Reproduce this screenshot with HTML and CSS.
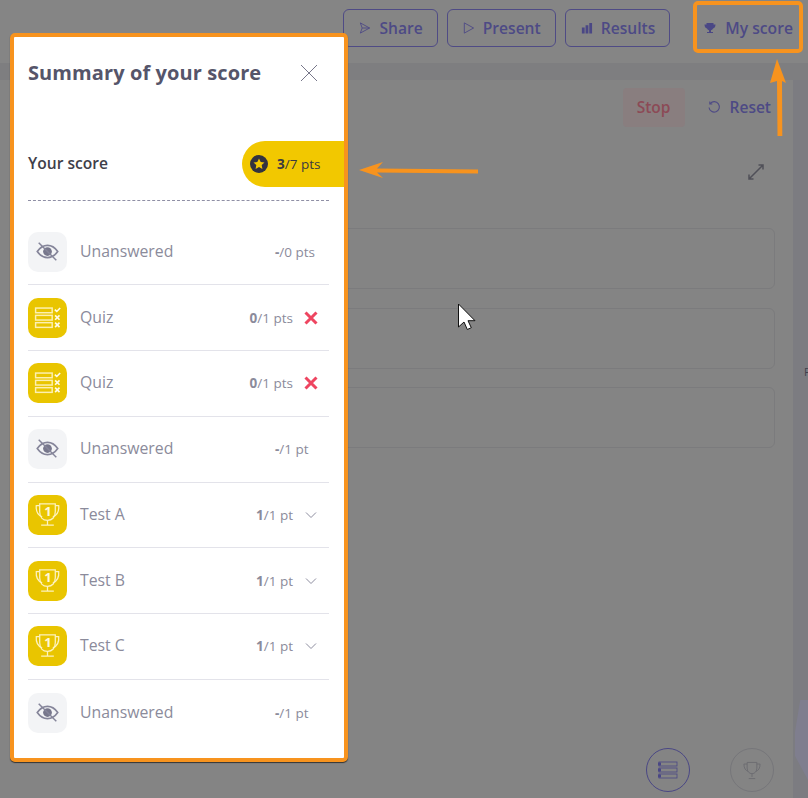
FILE: index.html
```html
<!DOCTYPE html>
<html lang="en">
<head>
    <meta charset="UTF-8">
    <meta name="viewport" content="width=device-width, initial-scale=1.0">
    <title>Summary of your score</title>
    <link rel="stylesheet" href="styles.css">
</head>
<body>
    <svg class="sprites" width="0" height="0">
        <symbol id="icon-eye" viewBox="0 0 40 40">
            <path d="M9.500 19.500c3-4.300 6.400-6.300 10.500-6.300s7.500 2 10.500 6.300c-3 4.300-6.400 6.300-10.500 6.300s-7.500-2-10.500-6.300z" fill="none" stroke="#85859a" stroke-width="1.700"/>
            <circle cx="20" cy="19.500" r="4.500" fill="#77778c"/>
            <path d="M11 10.500l18 18" fill="none" stroke="#85859a" stroke-width="1.500"/>
        </symbol>
        <symbol id="icon-quiz" viewBox="0 0 40 40">
            <g fill="none" stroke="#fdf0b0" stroke-width="1.500">
                <rect x="7.800" y="9.800" width="17" height="4.800"/>
                <rect x="7.800" y="17.300" width="17" height="4.800"/>
                <rect x="7.800" y="24.800" width="17" height="4.800"/>
                <path d="M27.500 11.500l2 1.800 3.500-3.600" stroke="#fffbe6" stroke-width="1.700"/>
                <path d="M27.800 17.300l4.500 4.500M32.300 17.300l-4.500 4.500" stroke="#fffbe6" stroke-width="1.700"/>
                <path d="M27.800 24.800l4.500 4.500M32.300 24.800l-4.500 4.500" stroke="#fffbe6" stroke-width="1.700"/>
            </g>
        </symbol>
        <symbol id="icon-trophy" viewBox="0 0 40 40">
            <g fill="none" stroke="#fdf2bd" stroke-width="1.300">
                <path d="M12 8.500h16v8c0 5.500-3 9-8 9s-8-3.500-8-9z"/>
                <path d="M12 10.500H8.500c-.5 5.500 1.500 9.500 6 11.500M28 10.500h3.500c.5 5.500-1.500 9.500-6 11.500"/>
                <path d="M20 25.500v4.500M13.500 30.500h13"/>
            </g>
        </symbol>
        <symbol id="icon-cross" viewBox="0 0 14 14">
            <path d="M1.500 1.500l11 11M12.500 1.500l-11 11" fill="none" stroke="#ee4560" stroke-width="3"/>
        </symbol>
        <symbol id="icon-chevron" viewBox="0 0 12 12">
            <path d="M1 3.500l5 5 5-5" fill="none" stroke="#8d8d9f" stroke-width="1"/>
        </symbol>
    </svg>

    <div class="page">
        <header class="topbar">
            <button class="btn">
                <svg width="13" height="14" viewBox="0 0 14 14"><path d="M2.500 1.500l10 5.500-10 5.500 2-5.500z M4.500 7h8" fill="none" stroke="#4f4b85" stroke-width="1"/></svg>
                Share
            </button>
            <button class="btn">
                <svg width="13" height="14" viewBox="0 0 14 14"><path d="M2.500 1.500l10 5.500-10 5.500z" fill="none" stroke="#4f4b85" stroke-width="1"/></svg>
                Present
            </button>
            <button class="btn">
                <svg width="13" height="14" viewBox="0 0 14 14"><path d="M2 6.500h3V13H2zM6 4h3v9H6zM10 1.500h3V13h-3z" fill="#4a4785"/></svg>
                Results
            </button>
            <button class="btn btn-plain">
                <svg width="14" height="14" viewBox="0 0 14 14"><path d="M3.500 2h7v1.500h2c0 2.500-1 3.500-2.500 4-.5 1-1.300 1.500-2 1.700V11h2v1H4v-1h2V9.200c-.7-.2-1.500-.7-2-1.700C2.500 7 1.500 6 1.500 3.500h2z" fill="#4a4785"/></svg>
                My score
            </button>
        </header>
        <div class="strip"></div>
        <main class="content">
            <div class="actions">
                <button class="btn-stop">Stop</button>
                <button class="btn-reset">
                    <svg width="14" height="14" viewBox="0 0 14 14"><path d="M3.200 3.500A5.200 5.200 0 1 1 2 7.500M2.800 1.500v2.500h2.500" fill="none" stroke="#4f4b85" stroke-width="1.100"/></svg>
                    Reset
                </button>
            </div>
            <div class="expand">
                <svg width="18" height="18" viewBox="0 0 18 18"><path d="M2.500 15.500l13-13M2 11.500v4.500h4.500M11.500 2H16v4.500" fill="none" stroke="#505058" stroke-width="1.500"/></svg>
            </div>
            <div class="slots">
                <div class="slot"></div>
                <div class="slot"></div>
                <div class="slot"></div>
            </div>
            <div class="steps">
                <div class="step step-active">
                    <svg width="22" height="18" viewBox="0 0 22 18"><g fill="none" stroke="#4a4785" stroke-width=".8"><rect x="2" y="1" width="18" height="4"/><rect x="2" y="7" width="18" height="4"/><rect x="2" y="13" width="18" height="4"/></g><path d="M1 1.500h3v3H1zM1 7.500h3v3H1zM1 13.500h3v3H1z" fill="#4a4785"/></svg>
                </div>
                <div class="step">
                    <svg width="20" height="21" viewBox="0 0 24 26"><path d="M6 3h12v7c0 4-2.500 7-6 7s-6-3-6-7zM6 5H2c0 5 2 8 5 9M18 5h4c0 5-2 8-5 9M12 17v4M8 23h8" fill="none" stroke="#6a6a70" stroke-width="1.100"/></svg>
                </div>
            </div>
        </main>
        <div class="edge-shape"></div>
        <span class="edge-letter">F</span>
    </div>

    <aside class="summary">
        <div class="summary-head">
            <h2>Summary of your score</h2>
            <svg class="close" width="18" height="18" viewBox="0 0 18 18"><path d="M1 1l16 16M17 1L1 17" fill="none" stroke="#77778a" stroke-width="1"/></svg>
        </div>
        <div class="score-row">
            <span class="score-label">Your score</span>
            <div class="score-pill">
                <svg width="18" height="18" viewBox="0 0 18 18"><circle cx="9" cy="9" r="9" fill="#33333f"/><path d="M9 3.500l1.700 3.500 3.800.5-2.800 2.600.7 3.800L9 12.100l-3.400 1.800.7-3.800-2.800-2.600 3.800-.5z" fill="#f2c800"/></svg>
                <span><b>3</b>/7 pts</span>
            </div>
        </div>
        <ul class="rows">
            <li class="row">
                <span class="tile tile-grey"><svg width="40" height="40"><use href="#icon-eye"/></svg></span>
                <span class="row-name">Unanswered</span>
                <span class="points points-open"><b>-</b>/0 pts</span>
            </li>
            <li class="row">
                <span class="tile"><svg width="40" height="40"><use href="#icon-quiz"/></svg></span>
                <span class="row-name">Quiz</span>
                <span class="points"><b>0</b>/1 pts</span>
                <span class="status"><svg width="14" height="14"><use href="#icon-cross"/></svg></span>
            </li>
            <li class="row">
                <span class="tile"><svg width="40" height="40"><use href="#icon-quiz"/></svg></span>
                <span class="row-name">Quiz</span>
                <span class="points"><b>0</b>/1 pts</span>
                <span class="status"><svg width="14" height="14"><use href="#icon-cross"/></svg></span>
            </li>
            <li class="row">
                <span class="tile tile-grey"><svg width="40" height="40"><use href="#icon-eye"/></svg></span>
                <span class="row-name">Unanswered</span>
                <span class="points points-open"><b>-</b>/1 pt</span>
            </li>
            <li class="row">
                <span class="tile"><svg width="40" height="40"><use href="#icon-trophy"/><text x="20" y="21" class="trophy-number">1</text></svg></span>
                <span class="row-name">Test A</span>
                <span class="points"><b>1</b>/1 pt</span>
                <span class="status status-open"><svg width="12" height="12"><use href="#icon-chevron"/></svg></span>
            </li>
            <li class="row">
                <span class="tile"><svg width="40" height="40"><use href="#icon-trophy"/><text x="20" y="21" class="trophy-number">1</text></svg></span>
                <span class="row-name">Test B</span>
                <span class="points"><b>1</b>/1 pt</span>
                <span class="status status-open"><svg width="12" height="12"><use href="#icon-chevron"/></svg></span>
            </li>
            <li class="row">
                <span class="tile"><svg width="40" height="40"><use href="#icon-trophy"/><text x="20" y="21" class="trophy-number">1</text></svg></span>
                <span class="row-name">Test C</span>
                <span class="points"><b>1</b>/1 pt</span>
                <span class="status status-open"><svg width="12" height="12"><use href="#icon-chevron"/></svg></span>
            </li>
            <li class="row">
                <span class="tile tile-grey"><svg width="40" height="40"><use href="#icon-eye"/></svg></span>
                <span class="row-name">Unanswered</span>
                <span class="points points-open"><b>-</b>/1 pt</span>
            </li>
        </ul>
    </aside>

    <div class="callout-box"></div>
    <svg class="arrow arrow-left" width="120" height="16" viewBox="0 0 120 16"><path d="M0 8L24 0l-6 6.500 101 1v4L18 10.500l6 5.500z" fill="#f7931e"/></svg>
    <svg class="arrow arrow-up" width="16" height="77" viewBox="0 0 16 77"><path d="M7 0l9 24-4-2 .3 55H7.500L7 22l-7 2z" fill="#f7931e"/></svg>
    <svg class="cursor" width="20" height="28" viewBox="0 0 20 28"><path d="M1.500 1v23l5.500-5 3.300 7.500 4-1.800-3.300-7H18z" fill="#fff" stroke="#111" stroke-width="1"/></svg>
</body>
</html>
```

FILE: styles.css
```css
* {
    box-sizing: border-box;
}
html, body {
    height: 100%;
}
body {
    margin: 0;
    font-family: "Open Sans", sans-serif;
    background-color: #7c7c81;
    overflow: hidden;
    position: relative;
}
button {
    font-family: inherit;
    background: none;
    cursor: pointer;
}
.sprites {
    position: absolute;
}
.trophy-number {
    font-family: "Open Sans", sans-serif;
    font-size: 13px;
    font-weight: 700;
    fill: #fff8d8;
    text-anchor: middle;
}

/* page behind the overlay */
.page {
    display: flex;
    flex-direction: column;
    height: 100%;
    position: relative;
}
.topbar {
    height: 63px;
    display: flex;
    justify-content: flex-end;
    align-items: flex-start;
    gap: 9px;
    padding: 9px 14px 0 0;
    background-color: #858585;
}
.btn {
    height: 38px;
    padding: 0 14px;
    display: flex;
    align-items: center;
    gap: 8px;
    border: 1px solid #4f4b85;
    border-radius: 6px;
    color: #4d4a85;
    font-size: 15.6px;
    font-weight: 600;
    white-space: nowrap;
}
.btn-plain {
    border-color: transparent;
    margin-left: 12px;
    padding: 0 0 0 11px;
    gap: 8px;
    font-size: 15.7px;
}
.strip {
    height: 17px;
    background-color: #7e7e80;
}
.content {
    flex: 1;
    margin: 0 15px 0 0;
    padding: 8px 18px 0 280px;
    background-color: #848484;
    position: relative;
}
.actions {
    display: flex;
    justify-content: flex-end;
    align-items: center;
    gap: 22px;
    margin-right: 4px;
}
.btn-stop {
    width: 62px;
    height: 39px;
    padding: 0 0 1px;
    border: 0;
    border-radius: 4px;
    background-color: #897e7f;
    color: #8c4a56;
    font-size: 15.5px;
    font-weight: 600;
}
.btn-reset {
    border: 0;
    padding: 0 0 1px;
    display: flex;
    align-items: center;
    gap: 9px;
    color: #4d4a85;
    font-size: 15.5px;
    font-weight: 600;
}
.expand {
    display: flex;
    justify-content: flex-end;
    margin: 36px 0 47px;
    padding-right: 10px;
    height: 18px;
}
.slots {
    display: flex;
    flex-direction: column;
    gap: 18.5px;
}
.slot {
    height: 61px;
    border: 1px solid #7b7b7d;
    border-radius: 6px;
}
.steps {
    position: absolute;
    right: 19px;
    bottom: 6px;
    display: flex;
    gap: 40px;
}
.step {
    width: 44px;
    height: 44px;
    border: 1px solid #76767a;
    border-radius: 50%;
    display: flex;
    align-items: center;
    justify-content: center;
}
.step-active {
    border-color: #4a4785;
}
.edge-shape {
    position: absolute;
    left: 795px;
    top: 700px;
    width: 13px;
    height: 80px;
    background-color: #7f7e8e;
    clip-path: polygon(40% 0, 100% 0, 100% 100%, 0 70%, 0 40%);
}
.edge-letter {
    position: absolute;
    left: 804px;
    top: 364px;
    font-size: 11px;
    color: #3f3f4d;
}

/* score summary panel */
.summary {
    position: absolute;
    left: 10px;
    top: 33px;
    width: 338px;
    height: 729px;
    padding: 0 15px 0 14px;
    background-color: #fff;
    border: 4px solid #f7931e;
    border-radius: 5px;
    box-shadow: 0 1px 1px #333;
}
.summary-head {
    height: 72px;
    display: flex;
    justify-content: space-between;
    align-items: center;
}
.summary-head h2 {
    margin: 0 0 2px;
    font-size: 20px;
    letter-spacing: .1px;
    font-weight: 700;
    color: #55556a;
}
.close {
    margin-right: 11px;
}
.score-row {
    margin-top: 32px;
    height: 46px;
    margin-right: -15px;
    display: flex;
    justify-content: space-between;
    align-items: center;
}
.score-label {
    padding-bottom: 2px;
    font-size: 15.6px;
    font-weight: 600;
    color: #3f3f4a;
}
.score-pill {
    width: 102px;
    height: 46px;
    padding-left: 8px;
    display: flex;
    align-items: center;
    gap: 9px;
    background-color: #f2c800;
    border-radius: 23px 0 0 23px;
    font-size: 13.5px;
    color: #3b3b40;
}
.rows {
    list-style: none;
    margin: 13px 0 0;
    padding: 18.5px 0 0;
    border-top: 1px dashed #8f8fa5;
}
.row {
    height: 65.75px;
    display: flex;
    align-items: center;
    border-bottom: 1px solid #e3e3ea;
    color: #8b8b9b;
}
.row:last-child {
    border-bottom: 0;
}
.tile {
    width: 39px;
    height: 40px;
    border-radius: 10px;
    background-color: #e9c500;
    display: flex;
    align-items: center;
    justify-content: center;
}
.tile-grey {
    background-color: #f3f4f6;
}
.row-name {
    flex: 1;
    margin-left: 13px;
    padding-bottom: 2px;
    font-size: 15.8px;
}
.points {
    font-size: 13.5px;
}
.points-open {
    width: 54px;
}
.status {
    width: 36px;
    padding-left: 11px;
    display: flex;
    align-items: center;
}
.status-open {
    padding-left: 12px;
}

/* annotations drawn over the screenshot */
.callout-box {
    position: absolute;
    left: 693px;
    top: 1px;
    width: 110px;
    height: 52px;
    border: 4px solid #f7931e;
    border-radius: 5px;
}
.arrow, .cursor {
    position: absolute;
}
.arrow-left {
    left: 359px;
    top: 162px;
}
.arrow-up {
    left: 770px;
    top: 59px;
}
.cursor {
    left: 457px;
    top: 303px;
}
```
